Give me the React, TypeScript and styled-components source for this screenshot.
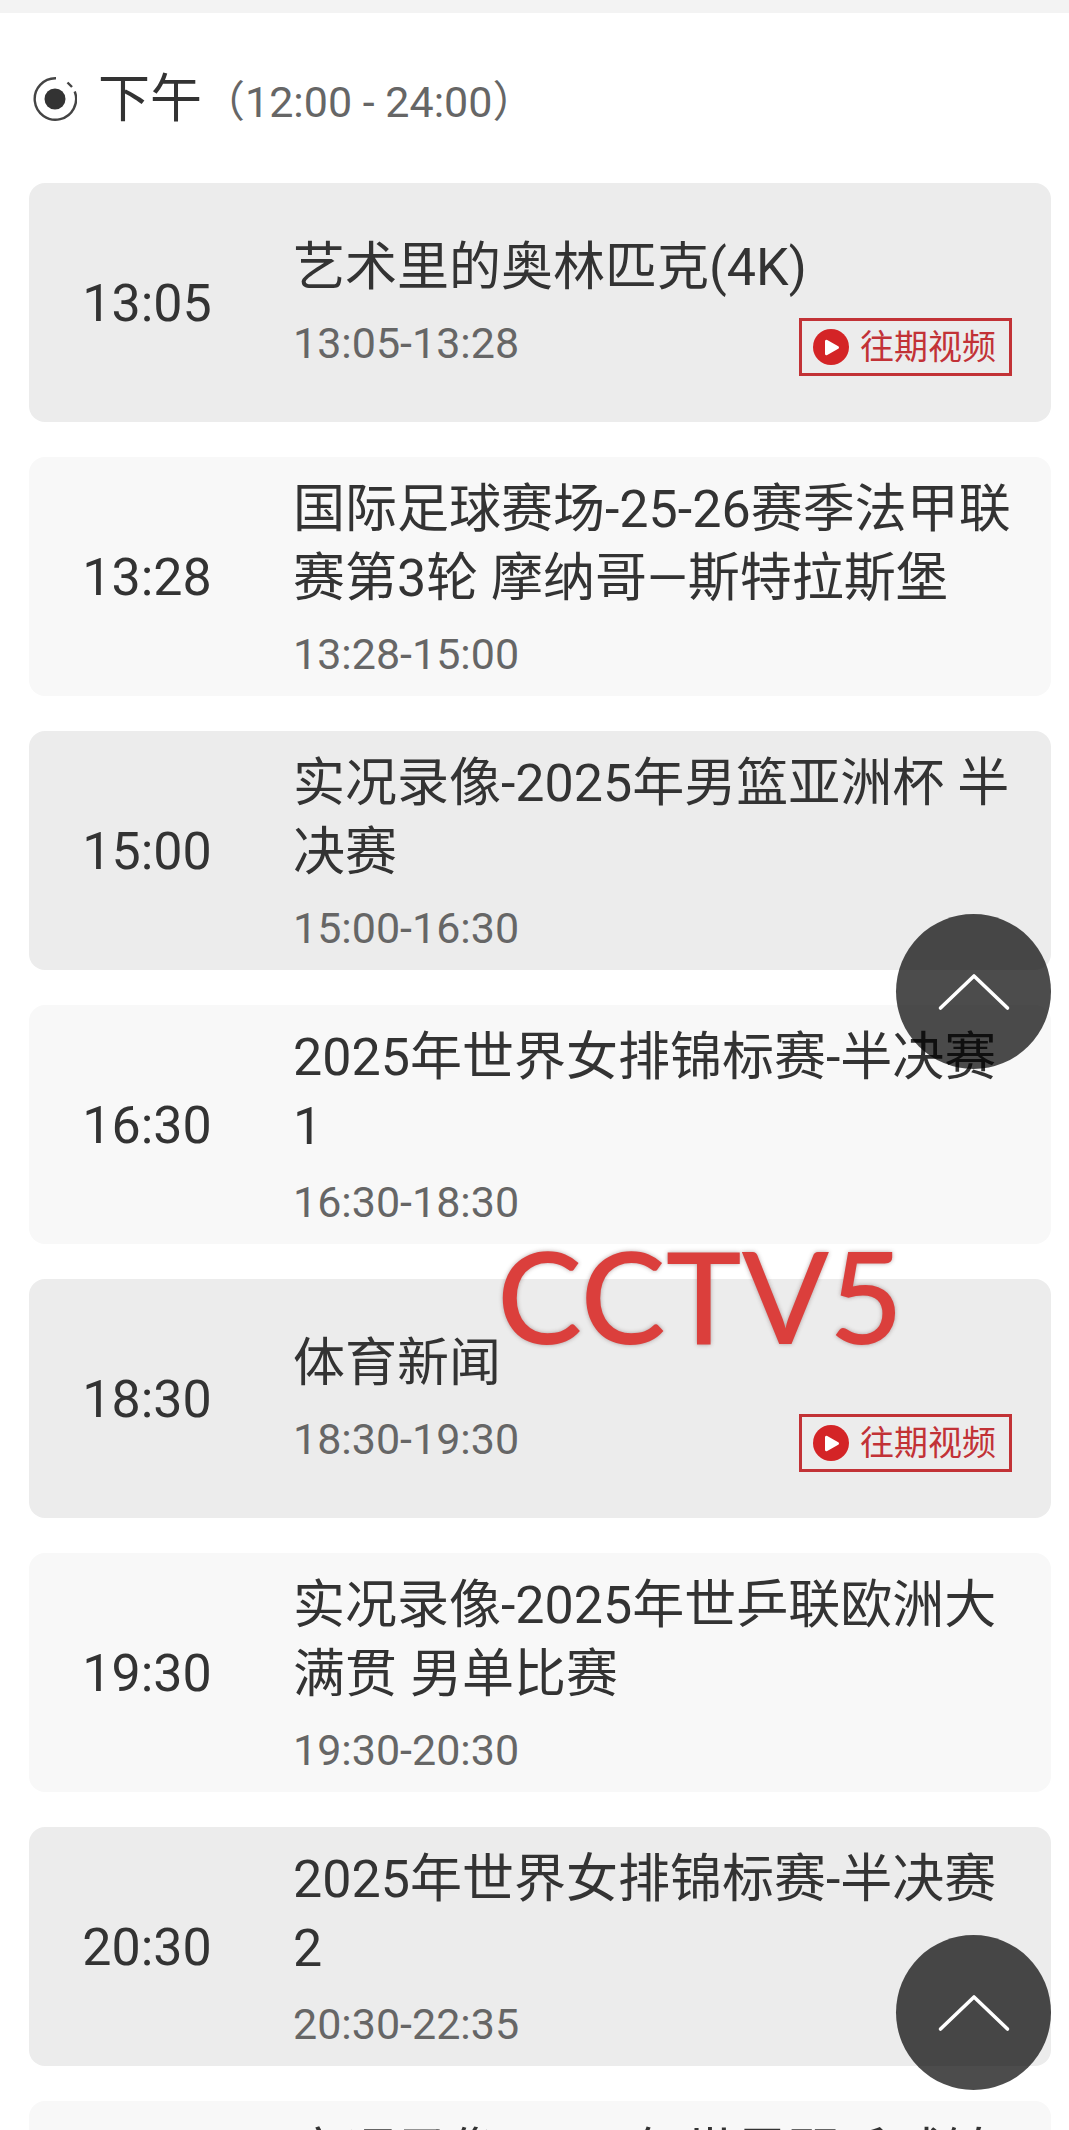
import React from "react";
import styled, { createGlobalStyle } from "styled-components";

const GlobalStyle = createGlobalStyle`
  * { box-sizing: border-box; }
  body {
    margin: 0;
    background: #ffffff;
    color: #333333;
    font-family: Roboto, "Noto Sans CJK SC", sans-serif;
  }
`;

const Page = styled.main`
  height: 100vh;
  overflow: hidden;
  border-top: 13px solid #f3f3f3;
  padding: 0 18px 0 29px;
`;

const Header = styled.header`
  display: flex;
  align-items: center;
  gap: 21px;
  height: 170px;
  padding: 2px 0 0 4px;
`;

const Heading = styled.h1`
  margin: 0;
  padding-top: 4px;
  font-size: 52px;
  line-height: 69px;
  font-weight: 400;
`;

const Range = styled.span`
  font-size: 43px;
  color: #666666;
`;

const List = styled.ul`
  display: flex;
  flex-direction: column;
  gap: 35px;
  margin: 0;
  padding: 0;
  list-style: none;
`;

const Card = styled.li<{ $past: boolean }>`
  position: relative;
  display: grid;
  grid-template-columns: 236px 1fr;
  column-gap: 28px;
  align-items: center;
  min-height: 239px;
  flex-shrink: 0;
  padding-right: 39px;
  border-radius: 16px;
  background: ${(p) => (p.$past ? "#ececec" : "#f8f8f8")};
`;

const Start = styled.time`
  padding-top: 1px;
  font-size: 52px;
  line-height: 69px;
  text-align: center;
`;

const Title = styled.h2`
  margin: 0 0 14px;
  padding-top: 3px;
  font-size: 52px;
  line-height: 69px;
  font-weight: 400;
`;

const Meta = styled.div`
  display: flex;
  align-items: flex-start;
  justify-content: space-between;
`;

const Slot = styled.span`
  font-size: 43px;
  line-height: 54px;
  color: #666666;
`;

const Replay = styled.a`
  display: flex;
  align-items: center;
  gap: 11px;
  height: 58px;
  margin-top: 2px;
  padding: 0 13px 0 11px;
  border: 3px solid #c23236;
  color: #c23236;
  font-size: 34px;
  line-height: 50px;
  text-decoration: none;
`;

const TopButton = styled.button<{ $drop: number }>`
  position: absolute;
  right: 0;
  bottom: ${(p) => -p.$drop}px;
  z-index: 1;
  width: 155px;
  height: 155px;
  padding: 0;
  border: 0;
  border-radius: 50%;
  background: rgba(0, 0, 0, 0.7);
`;

const Channel = styled.strong`
  position: absolute;
  left: 468px;
  top: -61px;
  z-index: 1;
  color: #db3f3c;
  font-family: Lato, sans-serif;
  font-size: 128px;
  line-height: 154px;
  font-weight: 500;
  text-shadow: 0 0 4px rgba(90, 60, 60, 0.45);
`;

const SectionIcon = () => (
  <svg width="44" height="44" viewBox="0 0 44 44" fill="none" aria-hidden="true">
    <circle cx="22" cy="22" r="10.5" fill="#333" />
    <path d="M23 1.3A20.7 20.7 0 1 0 41.7 14.5" stroke="#444" strokeWidth="2.4" />
    <path d="M34.5 5.5l4.5 4.5" stroke="#444" strokeWidth="2.4" />
  </svg>
);

const PlayIcon = () => (
  <svg width="36" height="36" viewBox="0 0 36 36" aria-hidden="true">
    <circle cx="18" cy="18" r="18" fill="#d42426" />
    <path d="M13.5 12.2v12.6l11-6.3z" fill="#fff" stroke="#fff" strokeWidth="3" strokeLinejoin="round" />
  </svg>
);

const ChevronUp = () => (
  <svg width="155" height="155" viewBox="0 0 155 155" fill="none" aria-hidden="true">
    <path d="M44.5 94L78 62l33.5 32" stroke="#fff" strokeWidth="3.6" strokeLinecap="round" strokeLinejoin="round" />
  </svg>
);

interface Programme {
  start: string;
  end: string;
  title: string;
  replay?: boolean;
  channel?: string;
  topButton?: number;
}

const programmes: Programme[] = [
  { start: "13:05", end: "13:28", title: "艺术里的奥林匹克(4K)", replay: true },
  { start: "13:28", end: "15:00", title: "国际足球赛场-25-26赛季法甲联赛第3轮 摩纳哥—斯特拉斯堡" },
  { start: "15:00", end: "16:30", title: "实况录像-2025年男篮亚洲杯 半决赛", topButton: 99 },
  { start: "16:30", end: "18:30", title: "2025年世界女排锦标赛-半决赛1" },
  { start: "18:30", end: "19:30", title: "体育新闻", replay: true, channel: "CCTV5" },
  { start: "19:30", end: "20:30", title: "实况录像-2025年世乒联欧洲大满贯 男单比赛" },
  { start: "20:30", end: "22:35", title: "2025年世界女排锦标赛-半决赛2", topButton: 24 },
  { start: "22:35", end: "24:00", title: "实况录像-2025年世界羽毛球锦标赛" },
];

export default function App() {
  return (
    <>
      <GlobalStyle />
      <Page>
        <Header>
          <SectionIcon />
          <Heading>
            下午<Range>（12:00 - 24:00）</Range>
          </Heading>
        </Header>
        <List>
          {programmes.map((p, i) => (
            <Card key={p.start} $past={i % 2 === 0}>
              <Start>{p.start}</Start>
              <div>
                <Title>{p.title}</Title>
                <Meta>
                  <Slot>
                    {p.start}-{p.end}
                  </Slot>
                  {p.replay && (
                    <Replay href="#replay">
                      <PlayIcon />
                      往期视频
                    </Replay>
                  )}
                </Meta>
              </div>
              {p.channel && <Channel>{p.channel}</Channel>}
              {p.topButton !== undefined && (
                <TopButton type="button" aria-label="返回顶部" $drop={p.topButton}>
                  <ChevronUp />
                </TopButton>
              )}
            </Card>
          ))}
        </List>
      </Page>
    </>
  );
}
